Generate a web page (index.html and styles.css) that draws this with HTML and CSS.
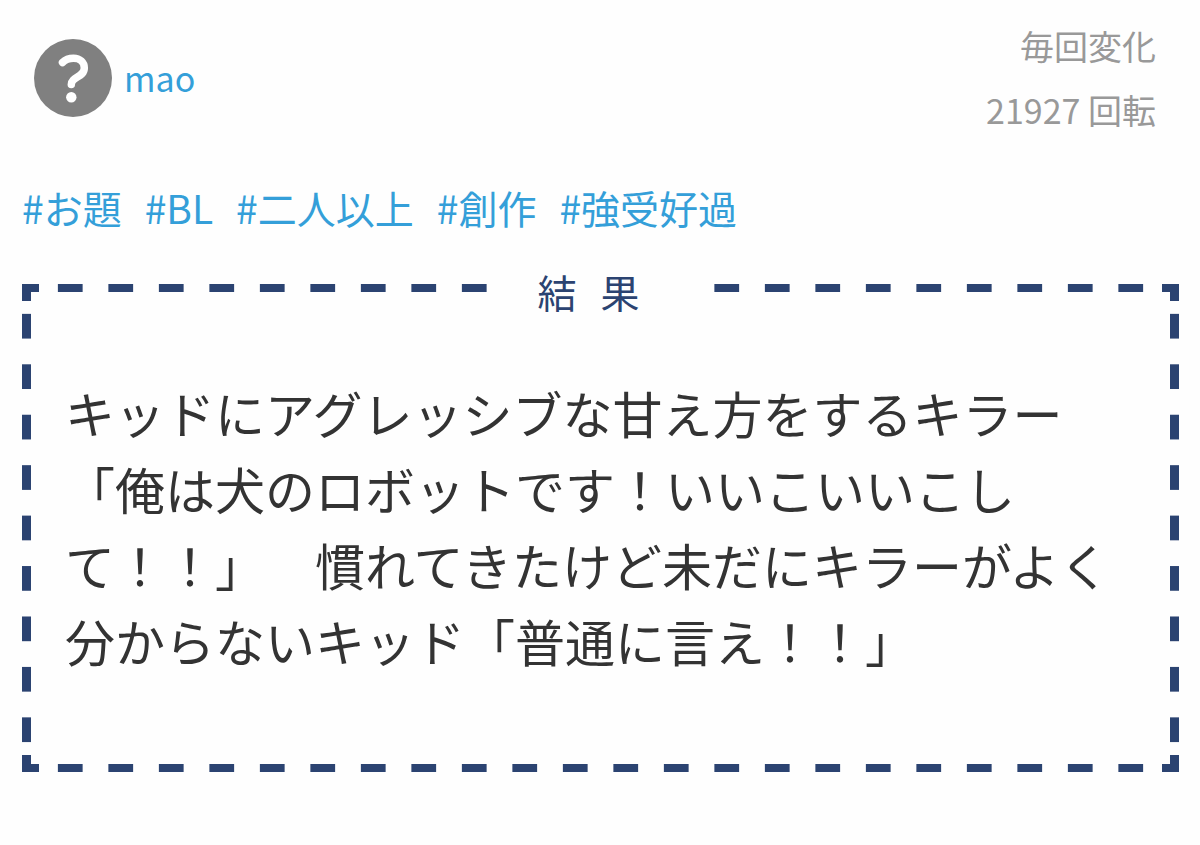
FILE: index.html
```html
<!DOCTYPE html>
<html lang="ja">

<head>
    <meta charset="UTF-8">
    <meta name="viewport" content="width=device-width, initial-scale=1.0">
    <title>結果</title>
    <link rel="stylesheet" href="styles.css">
</head>

<body>
    <header class="header">
        <a class="author" href="#">
            <svg class="avatar" viewBox="0 0 78 78" aria-hidden="true">
                <circle cx="39" cy="39" r="39" fill="#808080"/>
                <path d="M28.500 23.500C32 20 36 19.300 39.500 19.300C46 19.300 50.300 23.500 50.300 29C50.300 38.500 37.300 37.500 37.300 45.500" fill="none" stroke="#fff" stroke-width="7.500" stroke-linecap="round" stroke-linejoin="round"/>
                <circle cx="37.300" cy="58.300" r="5.200" fill="#fff"/>
            </svg>
            <span>mao</span>
        </a>
        <div class="stats">
            <div>毎回変化</div>
            <div>21927 回転</div>
        </div>
    </header>

    <nav class="tags">
        <a href="#">#お題</a>
        <a href="#">#BL</a>
        <a href="#">#二人以上</a>
        <a href="#">#創作</a>
        <a href="#">#強受好過</a>
    </nav>

    <main class="result">
        <h1 class="result-title">結果</h1>
        <p class="result-text">キッドにアグレッシブな甘え方をするキラー「俺は犬のロボットです！いいこいいこして！！」　慣れてきたけど未だにキラーがよく分からないキッド「普通に言え！！」</p>
    </main>
</body>

</html>
```

FILE: styles.css
```css
* {
    box-sizing: border-box;
}

body {
    font-family: "Noto Sans CJK JP", sans-serif;
    background-color: #fefefe;
    color: #333;
    margin: 0;
    padding: 14px 21px 72px 22px;
}

a {
    color: #349fd9;
    text-decoration: none;
}

/* Header */
.header {
    display: flex;
    justify-content: space-between;
    padding: 0 23px 0 12px;
    font-size: 34px;
    line-height: 64px;
}

.author {
    display: flex;
    align-items: center;
    gap: 12px;
}

.avatar {
    width: 78px;
    height: 78px;
}

.stats {
    color: #999;
    text-align: right;
}

/* Tags */
.tags {
    display: flex;
    flex-wrap: wrap;
    gap: 0 23px;
    margin: 35px 0 47px;
    font-size: 39px;
    line-height: 60px;
}

/* Result box, corners are drawn here and the dashes below */
.result {
    --line: linear-gradient(#2b4371, #2b4371);
    position: relative;
    padding: 0 43px 94px;
    background-image: var(--line), var(--line), var(--line), var(--line), var(--line), var(--line), var(--line), var(--line);
    background-position: left top, left top, right top, right top, left bottom, left bottom, right bottom, right bottom;
    background-size: 17px 8px, 9px 17px;
    background-repeat: no-repeat;
}

.result::before,
.result::after {
    content: "";
    position: absolute;
    pointer-events: none;
}

.result::before {
    --dash: linear-gradient(to right, transparent 25%, #2b4371 25%, #2b4371 75%, transparent 75%);
    inset: 0 23px;
    background: var(--dash) left top / 50px 8px round no-repeat, var(--dash) left bottom / 50px 8px round no-repeat;
}

.result::after {
    --dash: linear-gradient(transparent 25%, #2b4371 25%, #2b4371 75%, transparent 75%);
    inset: 17px 0;
    background: var(--dash) left top / 9px 50px no-repeat round, var(--dash) right top / 9px 50px no-repeat round;
}

.result-title {
    position: relative;
    z-index: 1;
    width: 220px;
    margin: 0 auto;
    background-color: #fefefe;
    color: #2b4371;
    font-size: 39px;
    font-weight: 400;
    line-height: 14px;
    letter-spacing: 24px;
    text-align: center;
}

.result-text {
    margin: 76px 0 0;
    font-size: 50px;
    line-height: 76px;
    text-spacing-trim: space-all;
}
```
